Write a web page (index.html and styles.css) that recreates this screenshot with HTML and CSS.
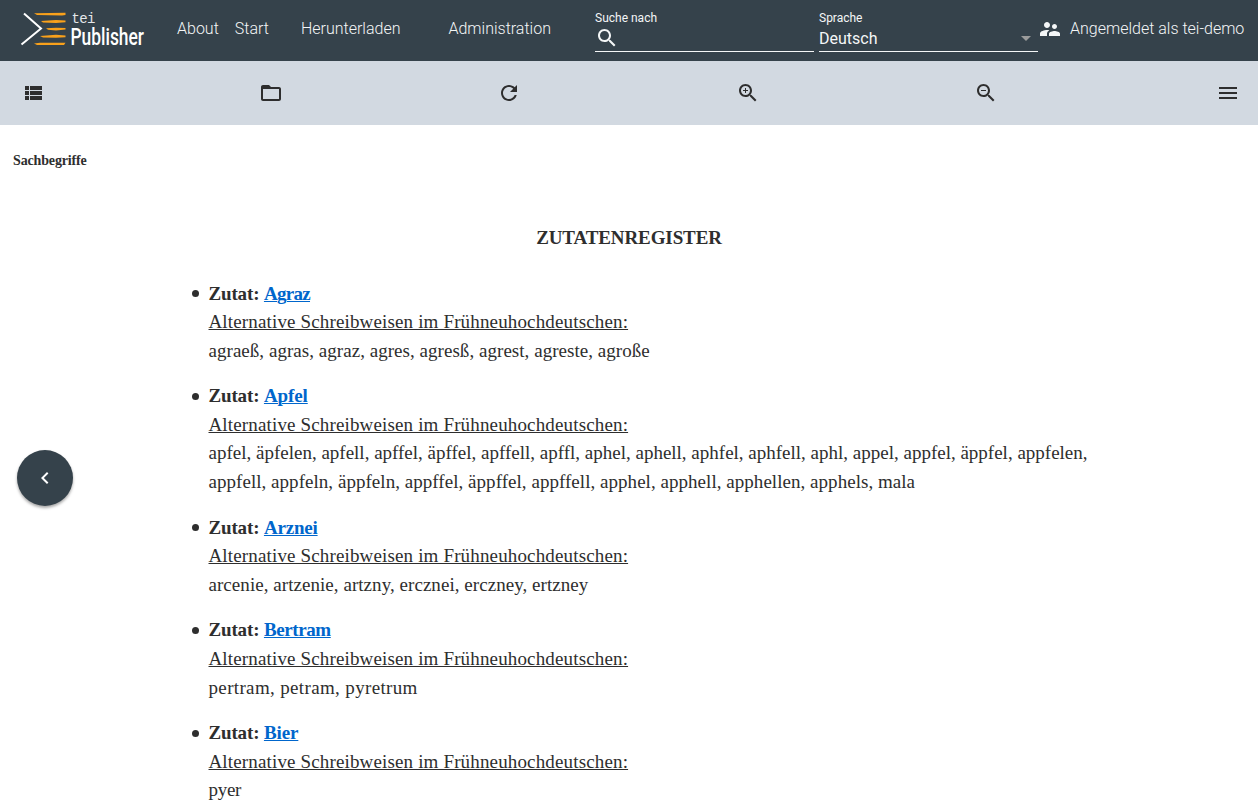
FILE: index.html
```html
<!DOCTYPE html>
<html lang="de">
<head>
<meta charset="utf-8">
<title>Zutatenregister</title>
<link rel="stylesheet" href="styles.css">
</head>
<body>
<header class="topbar">
  <svg class="logo" width="130" height="46" viewBox="0 0 130 46">
    <path d="M4 3.500 21 18.500 1.500 34.500" fill="none" stroke="#fff" stroke-width="2"/>
    <g fill="#f9a11b">
      <path d="M14 3.200 45.500 2.800V5L42 5.500 17 5z"/>
      <path d="M21 11 36 10 45.500 10.500V12.300L36 13 23 12.500z"/>
      <path d="M26 18.300 36 17.700 45.500 18V19.600L36 20.500 28 19.800z"/>
      <path d="M20 26 36 24.800 45.500 25.500V27.300L36 27.700 23 27.600z"/>
      <path d="M14 33.500 20 32.700 45.500 32.700 44 35 17 35z"/>
    </g>
    <text class="logo-tei" x="51.500" y="13" textLength="24">tei</text>
    <text class="logo-name" transform="translate(50.500 35) scale(.75 1)" textLength="98" lengthAdjust="spacingAndGlyphs">Publisher</text>
  </svg>
  <nav class="menu">
    <a class="about">About</a><a class="start">Start</a><a class="download">Herunterladen</a><a class="admin">Administration</a>
  </nav>
  <div class="field">
    <label>Suche nach</label>
    <div class="field-row"><svg width="24" height="24" viewBox="0 0 24 24" fill="currentColor"><path d="M15.500 14h-.79l-.28-.27C15.410 12.590 16 11.110 16 9.500 16 5.910 13.090 3 9.500 3S3 5.910 3 9.500 5.910 16 9.500 16c1.610 0 3.090-.59 4.230-1.570l.27.28v.79l5 4.990L20.490 19l-4.990-5zm-6 0C7.010 14 5 11.990 5 9.500S7.010 5 9.500 5 14 7.010 14 9.500 11.990 14 9.500 14z"/></svg></div>
  </div>
  <div class="field">
    <label>Sprache</label>
    <div class="field-row"><span>Deutsch</span><svg width="24" height="24" viewBox="0 0 24 24" fill="#9b9b9b"><path d="M7 10l5 5 5-5z"/></svg></div>
  </div>
  <div class="login">
    <svg width="24" height="24" viewBox="0 0 24 24" fill="currentColor"><path d="M16.500 12c1.380 0 2.490-1.120 2.490-2.500S17.880 7 16.500 7C15.120 7 14 8.120 14 9.500s1.120 2.500 2.500 2.500zM9 11c1.660 0 2.990-1.340 2.990-3S10.660 5 9 5C7.340 5 6 6.340 6 8s1.340 3 3 3zm7.500 3c-1.830 0-5.500.92-5.500 2.750V19h11v-2.250c0-1.830-3.670-2.750-5.500-2.750zM9 13c-2.330 0-7 1.170-7 3.500V19h7v-2.250c0-.85.33-2.340 2.370-3.470C10.500 13.100 9.660 13 9 13z"/></svg>
    <span>Angemeldet als tei-demo</span>
  </div>
</header>
<div class="toolbar">
  <svg viewBox="0 0 24 24"><path d="M4 14h4v-4H4v4zm0 5h4v-4H4v4zM4 9h4V5H4v4zm5 5h12v-4H9v4zm0 5h12v-4H9v4zM9 5v4h12V5H9z"/></svg>
  <svg viewBox="0 0 24 24"><path d="M20 6h-8l-2-2H4c-1.100 0-1.990.9-1.990 2L2 18c0 1.100.9 2 2 2h16c1.100 0 2-.9 2-2V8c0-1.100-.9-2-2-2zm0 12H4V8h16v10z"/></svg>
  <svg viewBox="0 0 24 24"><path d="M17.650 6.350C16.200 4.900 14.210 4 12 4c-4.420 0-7.990 3.580-7.990 8s3.570 8 7.990 8c3.730 0 6.840-2.550 7.730-6h-2.080c-.82 2.330-3.040 4-5.650 4-3.310 0-6-2.690-6-6s2.690-6 6-6c1.660 0 3.140.69 4.220 1.780L13 11h7V4l-2.350 2.350z"/></svg>
  <svg viewBox="0 0 24 24"><path d="M15.500 14h-.79l-.28-.27C15.410 12.590 16 11.110 16 9.500 16 5.910 13.090 3 9.500 3S3 5.910 3 9.500 5.910 16 9.500 16c1.610 0 3.090-.59 4.230-1.570l.27.28v.79l5 4.990L20.490 19l-4.990-5zm-6 0C7.010 14 5 11.990 5 9.500S7.010 5 9.500 5 14 7.010 14 9.500 11.990 14 9.500 14zm2.500-4h-2v2H9v-2H7V9h2V7h1v2h2v1z"/></svg>
  <svg viewBox="0 0 24 24"><path d="M15.500 14h-.79l-.28-.27C15.410 12.590 16 11.110 16 9.500 16 5.910 13.090 3 9.500 3S3 5.910 3 9.500 5.910 16 9.500 16c1.610 0 3.090-.59 4.230-1.570l.27.28v.79l5 4.990L20.490 19l-4.990-5zm-6 0C7.010 14 5 11.990 5 9.500S7.010 5 9.500 5 14 7.010 14 9.500 11.990 14 9.500 14zM7 9h5v1H7z"/></svg>
  <svg class="more" viewBox="0 0 24 24"><path d="M3 18h18v-2H3v2zm0-5h18v-2H3v2zm0-7v2h18V6H3z"/></svg>
</div>
<div class="crumb">Sachbegriffe</div>
<main class="content">
  <h1>ZUTATENREGISTER</h1>
  <ul>
    <li><b>Zutat: <a class="w1">Agraz</a></b><u>Alternative Schreibweisen im Frühneuhochdeutschen:</u><span class="v1">agraeß, agras, agraz, agres, agresß, agrest, agreste, agroße</span></li>
    <li><b>Zutat: <a class="w2">Apfel</a></b><u>Alternative Schreibweisen im Frühneuhochdeutschen:</u><span class="v2">apfel, äpfelen, apfell, apffel, äpffel, apffell, apffl, aphel, aphell, aphfel, aphfell, aphl, appel, appfel, äppfel, appfelen,</span><span class="v3">appfell, appfeln, äppfeln, appffel, äppffel, appffell, apphel, apphell, apphellen, apphels, mala</span></li>
    <li><b>Zutat: <a class="w3">Arznei</a></b><u>Alternative Schreibweisen im Frühneuhochdeutschen:</u><span class="v4">arcenie, artzenie, artzny, ercznei, erczney, ertzney</span></li>
    <li><b>Zutat: <a class="w4">Bertram</a></b><u>Alternative Schreibweisen im Frühneuhochdeutschen:</u><span class="v5">pertram, petram, pyretrum</span></li>
    <li><b>Zutat: <a class="w5">Bier</a></b><u>Alternative Schreibweisen im Frühneuhochdeutschen:</u><span class="v6">pyer</span></li>
  </ul>
</main>
<div class="fab"><svg width="24" height="24" viewBox="0 0 24 24" fill="#fff"><path d="M15.410 7.410 14 6l-6 6 6 6 1.410-1.410L10.830 12z"/></svg></div>
</body>
</html>
```
FILE: styles.css
```css
* { box-sizing: border-box; }
body { margin: 0; height: 804px; overflow: hidden; background: #fff; color: #2e2e2e; font-family: Roboto, sans-serif; font-size: 16px; }
.topbar { display: flex; height: 61px; padding-left: 20px; background: #35424b; color: #f4f6f7; }
.logo { margin-top: 10px; flex: none; }
.logo-tei { font: 14px "Liberation Mono", monospace; fill: #e4e7e9; }
.logo-name { font: 500 23px Roboto, sans-serif; fill: #fff; }
.menu { display: flex; width: 445px; padding-left: 27px; line-height: 57px; font-weight: 300; }
.start { margin-left: 16px; }
.download { margin-left: 32px; }
.admin { margin-left: 48px; }
.field { width: 219px; height: 52px; margin-right: 5px; padding-top: 10px; border-bottom: 1px solid #f4f6f7; flex: none; }
.field label { display: block; font-size: 12px; line-height: 16px; }
.field-row { display: flex; align-items: center; justify-content: space-between; height: 24px; }
.login { display: flex; align-items: center; gap: 8px; height: 57px; margin-left: -5px; font-weight: 300; white-space: nowrap; }
.toolbar { display: flex; justify-content: space-between; align-items: center; height: 64px; padding: 0 18px 0 21px; background: #d2d9e1; }
.toolbar svg { width: 24px; height: 24px; fill: #2e2e2e; }
.toolbar .more { margin-left: 4px; }
.crumb { height: 70px; padding: 24px 13px 0; font: bold 14px/24px "Liberation Serif", serif; letter-spacing: -.15px; }
.content { padding: 28px 160px 0 208.5px; font: 19px/28.6px "Liberation Serif", serif; }
h1 { margin: 0 0 27.5px -48.5px; text-align: center; font-size: 19px; line-height: 29px; letter-spacing: -.1px; }
ul { margin: 0; padding: 0; list-style: none; }
li { margin-bottom: 17px; }
li::before { content: ""; float: left; width: 7px; height: 7px; margin: 10.5px 0 0 -17px; border-radius: 50%; background: #2e2e2e; }
li > * { display: block; width: max-content; white-space: nowrap; }
li b { letter-spacing: -.15px; }
li u { letter-spacing: .15px; text-decoration-thickness: 1px; }
li a { color: #0066cc; text-decoration: underline; text-decoration-thickness: 1px; }
.w1 { letter-spacing: -.7px; }
.w2 { letter-spacing: -.1px; }
.w3 { letter-spacing: -.2px; }
.w4 { letter-spacing: -.4px; }
.w5 { letter-spacing: -.1px; }
.v1, .v3 { letter-spacing: .04px; }
.v4 { letter-spacing: .05px; }
.v5 { letter-spacing: .35px; }
.v6 { letter-spacing: -.3px; }
.fab { position: absolute; left: 17px; top: 450px; display: flex; align-items: center; justify-content: center; width: 56px; height: 56px; border-radius: 50%; background: #35424b; box-shadow: 0 2px 3px rgba(0,0,0,.35); }
```
